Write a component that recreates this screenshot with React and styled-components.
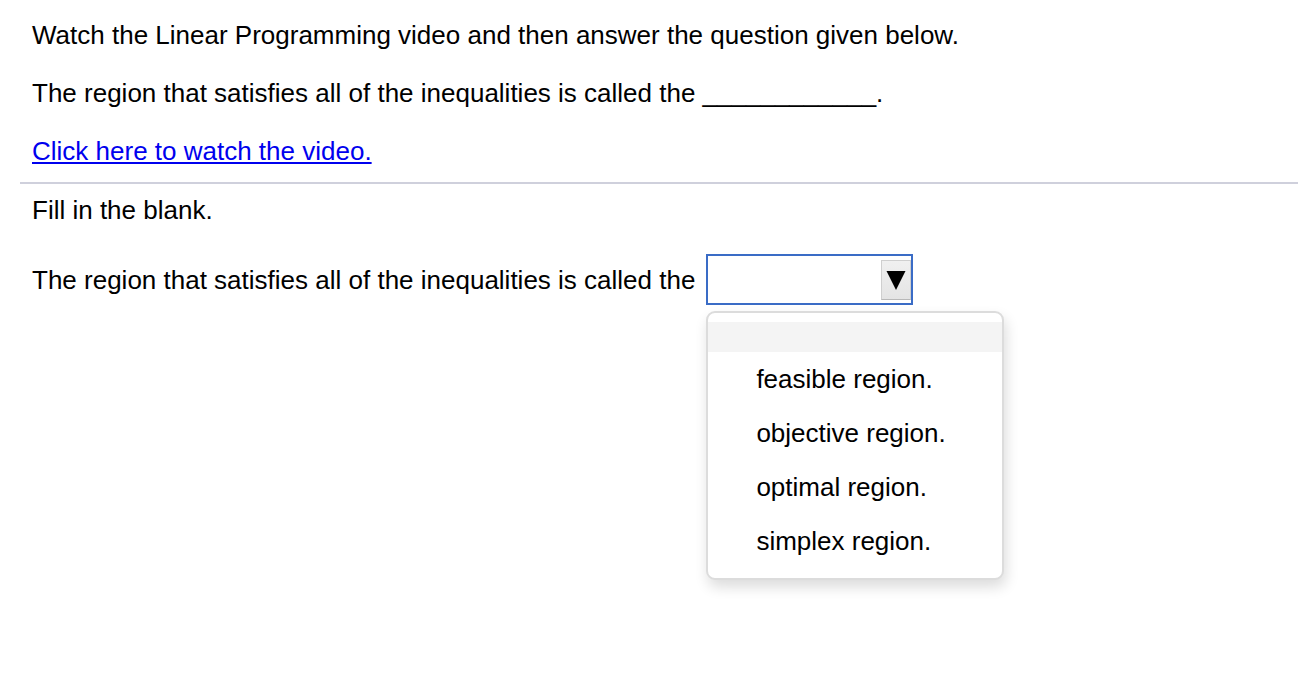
import React from 'react';
import styled, { createGlobalStyle } from 'styled-components';

const GlobalStyle = createGlobalStyle`
    body {
        margin: 0;
        background: #ffffff;
        font-family: "Liberation Sans", Arial, sans-serif;
        color: #000000;
    }
`;

const Page = styled.div`
    min-height: 100vh;
    box-sizing: border-box;
    padding: 20px 0 0 20px;
`;

const Intro = styled.div`
    padding-left: 12px;
    padding-bottom: 16px;
`;

const Line = styled.p`
    margin: 0 0 28px 0;
    font-size: 26px;
    line-height: 30px;
    &:last-child {
        margin-bottom: 0;
    }
`;

const VideoLink = styled.a`
    color: #0000ee;
    text-decoration: underline;
    text-underline-offset: 2px;
    cursor: pointer;
`;

const Divider = styled.hr`
    margin: 0;
    border: none;
    height: 2px;
    background: #cfd0dc;
`;

const Question = styled.div`
    padding: 11px 0 0 12px;
`;

const Instruction = styled.p`
    margin: 0 0 29px 0;
    font-size: 26px;
    line-height: 30px;
`;

const AnswerRow = styled.div`
    display: flex;
    align-items: center;
    gap: 11px;
    font-size: 26px;
    line-height: 30px;
`;

const SelectWrap = styled.div`
    position: relative;
    width: 207px;
    height: 51px;
    flex-shrink: 0;
`;

const SelectBox = styled.div`
    box-sizing: border-box;
    width: 100%;
    height: 100%;
    border: 2px solid #3a6cc6;
    background: #ffffff;
    display: flex;
    align-items: center;
    justify-content: flex-end;
`;

const ArrowButton = styled.div`
    box-sizing: border-box;
    width: 30px;
    height: 40px;
    background: linear-gradient(#f0f0f0, #e4e4e4);
    border: 1px solid #cfcfcf;
    border-bottom-color: #b8b8b8;
    display: flex;
    align-items: center;
    justify-content: center;
`;

const Menu = styled.div`
    position: absolute;
    z-index: 5;
    top: 57px;
    left: 0;
    box-sizing: border-box;
    width: 298px;
    padding: 9px 0 10px;
    background: #ffffff;
    border: 2px solid #dcdcdc;
    border-radius: 9px;
    box-shadow: 2px 7px 14px rgba(0, 0, 0, 0.14);
`;

const Option = styled.div`
    height: ${p => (p.$blank ? '30px' : '54px')};
    background: ${p => (p.$blank ? '#f4f4f4' : 'transparent')};
    padding-left: 48px;
    display: flex;
    align-items: center;
    font-size: 26px;
    line-height: 30px;
    white-space: nowrap;
`;

const options = ['feasible region.', 'objective region.', 'optimal region.', 'simplex region.'];

const App = () => {
    return (
        <>
            <GlobalStyle />
            <Page>
                <Intro>
                    <Line>Watch the Linear Programming video and then answer the question given below.</Line>
                    <Line>The region that satisfies all of the inequalities is called the ____________.</Line>
                    <Line>
                        <VideoLink>Click here to watch the video.</VideoLink>
                    </Line>
                </Intro>
                <Divider />
                <Question>
                    <Instruction>Fill in the blank.</Instruction>
                    <AnswerRow>
                        <span>The region that satisfies all of the inequalities is called the</span>
                        <SelectWrap>
                            <SelectBox>
                                <ArrowButton>
                                    <svg width="20" height="20" viewBox="0 0 20 20">
                                        <polygon points="0.5,1 19.5,1 10,20" fill="#000" />
                                    </svg>
                                </ArrowButton>
                            </SelectBox>
                            <Menu>
                                <Option $blank />
                                {options.map(o => (
                                    <Option key={o}>{o}</Option>
                                ))}
                            </Menu>
                        </SelectWrap>
                    </AnswerRow>
                </Question>
            </Page>
        </>
    );
};

export default App;
